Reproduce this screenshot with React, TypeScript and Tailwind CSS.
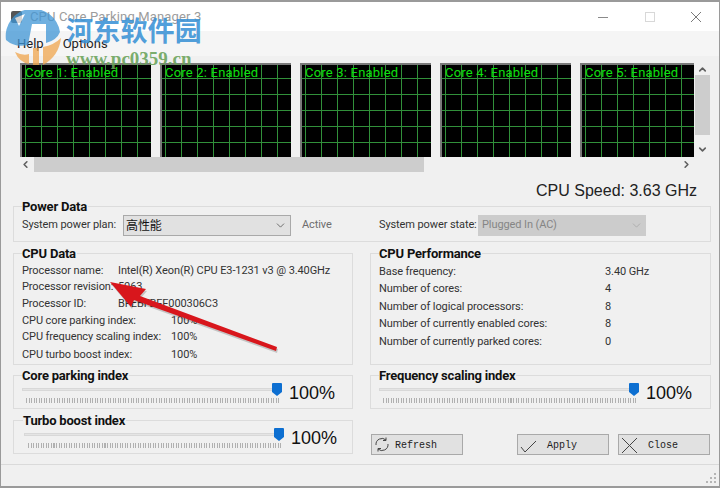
import { ChevronDown, ChevronLeft, ChevronRight, ChevronUp } from 'lucide-react';
import type { ReactNode } from 'react';

function CoreGraph({ n, width = 131 }: { n: number; width?: number }) {
  const id = `grid-${n}`;
  return (
    <div className="relative h-[94px] shrink-0 border-l-2 border-t-2 border-[#7a7a7a] bg-black" style={{ width }}>
      <svg className="block h-full w-full" xmlns="http://www.w3.org/2000/svg">
        <defs>
          <pattern id={id} width="16" height="16" x="3" y="13" patternUnits="userSpaceOnUse">
            <path d="M 0.5 16 L 0.5 0 M 0 0.5 L 16 0.5" fill="none" stroke="#31903a" strokeWidth="1" />
          </pattern>
        </defs>
        <rect width="100%" height="100%" fill={`url(#${id})`} />
      </svg>
      <span className="absolute left-[3px] top-[-1px] whitespace-nowrap text-[13px] leading-[18px] tracking-[0.2px] text-[#0fe00f]">
        Core {n}: Enabled
      </span>
    </div>
  );
}

function GroupBox({ title, className, legendClass = 'ml-[8px]', children }: { title: string; className: string; legendClass?: string; children: ReactNode }) {
  return (
    <div className={`border border-[#dcdcdc] ${className}`}>
      <div className={`-mt-[7px] w-fit bg-[#f0f0f0] pr-[1px] text-[13px] font-bold leading-[14px] tracking-[-0.2px] text-[#111] ${legendClass}`}>{title}</div>
      {children}
    </div>
  );
}

function Slider({ shift = 0 }: { shift?: number }) {
  return (
    <div className="flex items-start" style={{ marginLeft: 8 + shift }}>
      <div className="relative h-[24px] w-[260px]">
        <div className="absolute left-0 right-0 top-[5px] h-[3px] border border-[#d8d8d8] bg-[#e4e4e4]" />
        <svg className="absolute left-[250px] top-0" width="10" height="13" viewBox="0 0 10 13">
          <path d="M1 0 H9 Q10 0 10 1 V9 L5 13 L0 9 V1 Q0 0 1 0 Z" fill="#0d6fd1" />
        </svg>
        <div className="absolute left-[4px] right-[3px] top-[15px] h-[5px] bg-[repeating-linear-gradient(90deg,#b0b0b0_0,#b0b0b0_1px,transparent_1px,transparent_2.55px)]" />
      </div>
      <span className="ml-[7px] mt-[-2px] font-['Liberation_Sans',sans-serif] text-[18px] leading-[24px] tracking-normal text-[#111]">100%</span>
    </div>
  );
}

function InfoRow({ label, value, valueWidth, h = 'h-[17px]' }: { label: string; value: string; valueWidth: string; h?: string }) {
  return (
    <div className={`flex items-center whitespace-nowrap text-[11px] tracking-[-0.1px] ${h}`}>
      <span className={valueWidth}>{label}</span>
      <span>{value}</span>
    </div>
  );
}

function ActionButton({ icon, label, className }: { icon: ReactNode; label: string; className: string }) {
  return (
    <button className={`relative flex h-[21px] w-[92px] items-center border border-[#a9a9a9] bg-[#e1e1e1] pt-[1px] font-['Liberation_Mono',monospace] text-[10px] text-[#222] ${className}`}>
      {icon}
      {label}
    </button>
  );
}

export default function App() {
  return (
    <div className="relative flex h-[488px] w-[720px] flex-col overflow-hidden border border-b-2 border-t-2 border-[#9a9a9a] bg-[#f0f0f0] font-['Roboto','Noto_Sans',sans-serif] text-[12px] text-[#333]">
      {/* title bar */}
      <div className="flex h-[29px] shrink-0 items-center bg-white pl-[10px]">
        <div className="h-[12px] w-[11px] rounded-[2px] bg-[#555]" />
        <span className="ml-[8px] text-[13px] tracking-[0.15px] text-[#9c9c9c]">CPU Core Parking Manager 3</span>
        <div className="ml-auto flex items-center">
          <svg width="12" height="12" viewBox="0 0 12 12" className="mr-[35px]"><path d="M1 6.5 H11" stroke="#8a8a8a" /></svg>
          <svg width="12" height="12" viewBox="0 0 12 12" className="mr-[34px]"><rect x="1.5" y="1.5" width="9" height="9" fill="none" stroke="#d8d8d8" /></svg>
          <svg width="12" height="12" viewBox="0 0 12 12" className="mr-[17px]"><path d="M1 1 L11 11 M11 1 L1 11" stroke="#7a7a7a" /></svg>
        </div>
      </div>

      {/* menu */}
      <div className="flex h-[25px] shrink-0 items-center gap-[19px] bg-[#f5f5f5] pl-[16px] text-[13px] text-[#222]">
        <span>Help</span>
        <span>Options</span>
      </div>

      {/* core graphs */}
      <div className="ml-[19px] mt-[7px] flex h-[94px] shrink-0">
        <div className="flex w-[674px] shrink-0 gap-[9px] overflow-hidden">
          <CoreGraph n={1} />
          <CoreGraph n={2} />
          <CoreGraph n={3} />
          <CoreGraph n={4} />
          <CoreGraph n={5} width={114} />
        </div>
        <div className="flex w-[16px] flex-col items-center pl-[1px] text-[#606060]">
          <div className="flex h-[12px] items-center"><ChevronUp size={11} strokeWidth={3.5} /></div>
          <div className="h-[60px] w-full bg-[#cdcdcd]" />
          <div className="flex flex-1 items-end pb-[2px]"><ChevronDown size={11} strokeWidth={3.5} /></div>
        </div>
      </div>
      <div className="ml-[16px] flex h-[15px] w-[678px] shrink-0 items-center text-[#606060]">
        <div className="flex w-[17px] justify-center"><ChevronLeft size={11} strokeWidth={3.5} /></div>
        <div className="h-full w-[390px] bg-[#cdcdcd]" />
        <div className="ml-auto flex w-[17px] justify-center"><ChevronRight size={11} strokeWidth={3.5} /></div>
      </div>

      <div className="mr-[22px] mt-[9px] h-[20px] shrink-0 text-right font-['Liberation_Sans',sans-serif] text-[16px] leading-[20px] text-[#222]">
        CPU Speed: 3.63 GHz
      </div>

      {/* power data */}
      <GroupBox title="Power Data" className="ml-[12px] mt-[5px] h-[36px] w-[698px] shrink-0">
        <div className="flex h-[21px] items-center whitespace-nowrap pt-[1px] text-[11px] tracking-[-0.1px]">
          <span className="ml-[8px] w-[101px]">System power plan:</span>
          <div className="flex h-[21px] w-[168px] items-center justify-between border border-[#a9a9a9] bg-[#e1e1e1] pl-[2px] pr-[3px] font-['Noto_Sans_CJK_SC',sans-serif] text-[12px] text-[#111]">
            高性能
            <ChevronDown size={13} strokeWidth={1.5} className="text-[#555]" />
          </div>
          <span className="ml-[11px] w-[77px] text-[#6d6d6d]">Active</span>
          <span className="w-[99px]">System power state:</span>
          <div className="flex h-[21px] w-[168px] items-center justify-between bg-[#cccccc] pl-[4px] pr-[3px] text-[#858585]">
            Plugged In (AC)
            <ChevronDown size={13} strokeWidth={1.5} className="text-[#a8a8a8]" />
          </div>
        </div>
      </GroupBox>

      {/* cpu data + performance */}
      <div className="ml-[12px] mt-[11px] flex h-[112px] shrink-0 gap-[17px]">
        <GroupBox title="CPU Data" className="w-[340px]">
          <div className="pl-[8px] pt-[2px]">
            <InfoRow label="Processor name:" value="Intel(R) Xeon(R) CPU E3-1231 v3 @ 3.40GHz" valueWidth="w-[96px]" h="h-[16px]" />
            <InfoRow label="Processor revision:" value="5063" valueWidth="w-[96px]" />
            <InfoRow label="Processor ID:" value="BFEBFBFF000306C3" valueWidth="w-[96px]" />
            <InfoRow label="CPU core parking index:" value="100%" valueWidth="w-[149px]" h="h-[16px]" />
            <InfoRow label="CPU frequency scaling index:" value="100%" valueWidth="w-[149px]" />
            <InfoRow label="CPU turbo boost index:" value="100%" valueWidth="w-[149px]" h="h-[18px]" />
          </div>
        </GroupBox>
        <GroupBox title="CPU Performance" className="w-[341px]">
          <div className="pl-[8px] pt-[2px]">
            <InfoRow label="Base frequency:" value="3.40 GHz" valueWidth="w-[226px]" h="h-[18px]" />
            <InfoRow label="Number of cores:" value="4" valueWidth="w-[226px]" />
            <InfoRow label="Number of logical processors:" value="8" valueWidth="w-[226px]" h="h-[18px]" />
            <InfoRow label="Number of currently enabled cores:" value="8" valueWidth="w-[226px]" />
            <InfoRow label="Number of currently parked cores:" value="0" valueWidth="w-[226px]" h="h-[18px]" />
          </div>
        </GroupBox>
      </div>

      {/* sliders + buttons */}
      <div className="ml-[12px] mt-[10px] flex h-[80px] shrink-0 gap-[17px]">
        <div className="flex w-[340px] flex-col gap-[11px]">
          <GroupBox title="Core parking index" className="h-[34px]"><Slider /></GroupBox>
          <GroupBox title="Turbo boost index" className="h-[34px]" legendClass="ml-[9px]"><Slider shift={2} /></GroupBox>
        </div>
        <div className="flex w-[341px] flex-col">
          <GroupBox title="Frequency scaling index" className="h-[34px]"><Slider /></GroupBox>
          <div className="ml-[1px] mt-[25px] flex">
            <ActionButton
              className="pl-[23px]"
              label="Refresh"
              icon={
                <svg width="14" height="15" viewBox="0 0 14 15" className="absolute left-[3px] top-[2px]" fill="none" stroke="#444" strokeWidth="1">
                  <path d="M1 8 A6 6 0 0 1 11 3 M13 7 A6 6 0 0 1 3 12" />
                  <path d="M11 0.5 V3.5 H8 M3 14.5 V11.5 H6" />
                </svg>
              }
            />
            <ActionButton
              className="ml-[54px] pl-[29px]"
              label="Apply"
              icon={
                <svg width="17" height="13" viewBox="0 0 17 13" className="absolute left-[2px] top-[5px]" fill="none" stroke="#444" strokeWidth="1"><path d="M1 7 L5 12 L16 1" /></svg>
              }
            />
            <ActionButton
              className="ml-[9px] pl-[29px]"
              label="Close"
              icon={
                <svg width="17" height="17" viewBox="0 0 17 17" className="absolute left-[2px] top-[2px]" fill="none" stroke="#444" strokeWidth="1"><path d="M1 1 L16 16 M16 1 L1 16" /></svg>
              }
            />
          </div>
        </div>
      </div>

      {/* status strip */}
      <div className="mt-[9px] flex-1 border-t border-[#dadada]" />
      <svg className="absolute bottom-[1px] right-[1px]" width="12" height="12" viewBox="0 0 12 12" fill="#b5b5b5">
        <rect x="8" y="0" width="2" height="2" />
        <rect x="4" y="4" width="2" height="2" />
        <rect x="8" y="4" width="2" height="2" />
        <rect x="0" y="8" width="2" height="2" />
        <rect x="4" y="8" width="2" height="2" />
        <rect x="8" y="8" width="2" height="2" />
      </svg>

      {/* red arrow pasted over the shot */}
      <svg className="pointer-events-none absolute left-[-1px] top-[-2px]" width="720" height="488" viewBox="0 0 720 488">
        <polygon points="110,282 146,289 140,296 277,347 276,351 134,300 131,307" fill="#000" opacity="0.18" transform="translate(1 2)" />
        <polygon points="110,282 146,289 140,296 277,347 276,351 134,300 131,307" fill="#d8161c" />
      </svg>

      {/* site watermark */}
      <div className="pointer-events-none absolute left-[4px] top-[8px] flex items-start">
        <svg width="58" height="56" viewBox="0 0 58 56" className="opacity-75">
          <path d="M1 30 A27 27 0 0 1 55 22 Q52 30 41 33 V14 H27 L23 35 Q10 38 1 30 Z" fill="#3f96d6" />
          <path d="M10 8 L20 4 L14 16 Z" fill="#ffffff" />
          <path d="M10 42 Q18 46 24 44 V54 Q14 52 10 42 Z" fill="#f0a64e" />
          <path d="M28 38 H34 V55 H28 Z" fill="#f0a64e" />
          <path d="M38 37 Q49 35 56 28 Q54 46 38 55 Z" fill="#f0a64e" />
        </svg>
        <div className="ml-[3px] mt-[4px] flex flex-col">
          <span className="font-['Noto_Sans_CJK_SC',sans-serif] text-[27px] font-bold leading-[32px] tracking-[0.2px] text-[#3a92d6]/90">河东软件园</span>
          <span className="mt-[3px] font-['Liberation_Serif',serif] text-[19px] font-bold leading-[20px] text-[#6aa35a]/90">www.pc0359.cn</span>
        </div>
      </div>
    </div>
  );
}
